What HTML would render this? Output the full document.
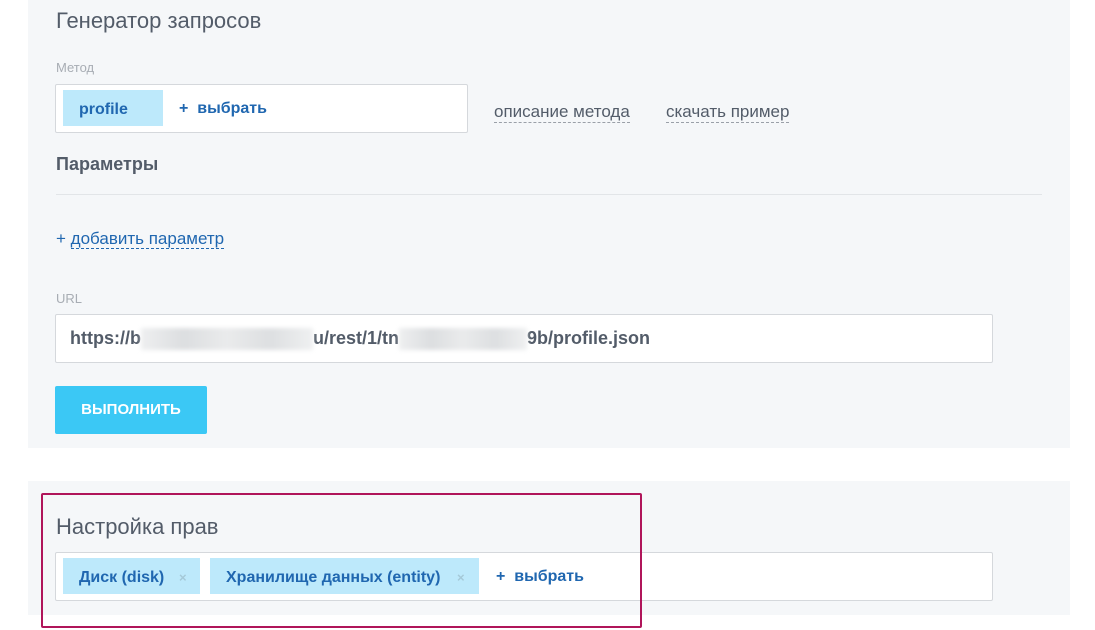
<!DOCTYPE html>
<html><head><meta charset="utf-8"><style>
*{margin:0;padding:0;box-sizing:border-box}
body{width:1095px;height:630px;background:#fff;position:relative;overflow:hidden;font-family:"Liberation Sans",Arial,sans-serif}
.a{position:absolute}
.panel{background:#f5f7f9}
.h{font-size:22px;color:#535c69}
.lbl{font-size:13px;color:#a8adb4}
.box{background:#fff;border:1px solid #d5d8dc;border-radius:2px}
.tag{background:#bde9fb;color:#2067b0;font-weight:bold;font-size:16px;line-height:36px;padding-top:2px;height:36px}
.sel{color:#2067b0;font-weight:bold;font-size:16px}
.dl{font-size:17px;color:#535c69;border-bottom:1px dashed #9aa0a8;line-height:21px}
.x{color:#a5c9d8;font-size:13px;font-weight:bold}
.bl{display:inline-block;height:22px;vertical-align:middle;background:linear-gradient(90deg,#eeeff0,#dcdee0,#eaebec,#dddfe1,#eff0f1);filter:blur(2px)}
</style></head><body>
<div class="a panel" style="left:28px;top:0;width:1042px;height:448px"></div>
<div class="a panel" style="left:28px;top:481px;width:1042px;height:134px"></div>

<div class="a h" style="left:56px;top:8px">Генератор запросов</div>
<div class="a lbl" style="left:56px;top:60px">Метод</div>
<div class="a box" style="left:55px;top:84px;width:413px;height:49px"></div>
<div class="a tag" style="left:63px;top:90px;width:100px;padding-left:16px">profile</div>
<div class="a sel" style="left:179px;top:100px">+&nbsp;&nbsp;выбрать</div>
<div class="a dl" style="left:494px;top:101px">описание метода</div>
<div class="a dl" style="left:666px;top:101px">скачать пример</div>

<div class="a" style="left:56px;top:154px;font-size:18px;font-weight:bold;color:#535c69">Параметры</div>
<div class="a" style="left:56px;top:194px;width:986px;height:1px;background:#e2e5e8"></div>
<div class="a" style="left:56px;top:229px;font-size:17px;color:#2067b0">+ <span style="border-bottom:1px dashed #2067b0">добавить параметр</span></div>

<div class="a lbl" style="left:56px;top:291px">URL</div>
<div class="a box" style="left:55px;top:314px;width:938px;height:49px"></div>
<div class="a" style="left:70px;top:328px;font-size:18px;font-weight:bold;color:#535c69;white-space:nowrap">https://b<span class="bl" style="width:172px"></span>u/rest/1/tn<span class="bl" style="width:128px"></span>9b/profile.json</div>

<div class="a" style="left:55px;top:386px;width:152px;height:48px;background:#3bc8f5;border-radius:2px;color:#fff;font-weight:bold;font-size:15px;line-height:48px;text-align:center">ВЫПОЛНИТЬ</div>

<div class="a h" style="left:56px;top:514px">Настройка прав</div>
<div class="a box" style="left:55px;top:552px;width:938px;height:49px"></div>
<div class="a tag" style="left:63px;top:558px;width:137px;padding-left:16px">Диск (disk)<span class="x" style="position:absolute;left:116px">×</span></div>
<div class="a tag" style="left:210px;top:558px;width:269px;padding-left:16px">Хранилище данных (entity)<span class="x" style="position:absolute;left:247px">×</span></div>
<div class="a sel" style="left:496px;top:568px">+&nbsp;&nbsp;выбрать</div>

<div class="a" style="left:41px;top:493px;width:601px;height:135px;border:2px solid #b0155a;border-radius:2px"></div>
</body></html>
